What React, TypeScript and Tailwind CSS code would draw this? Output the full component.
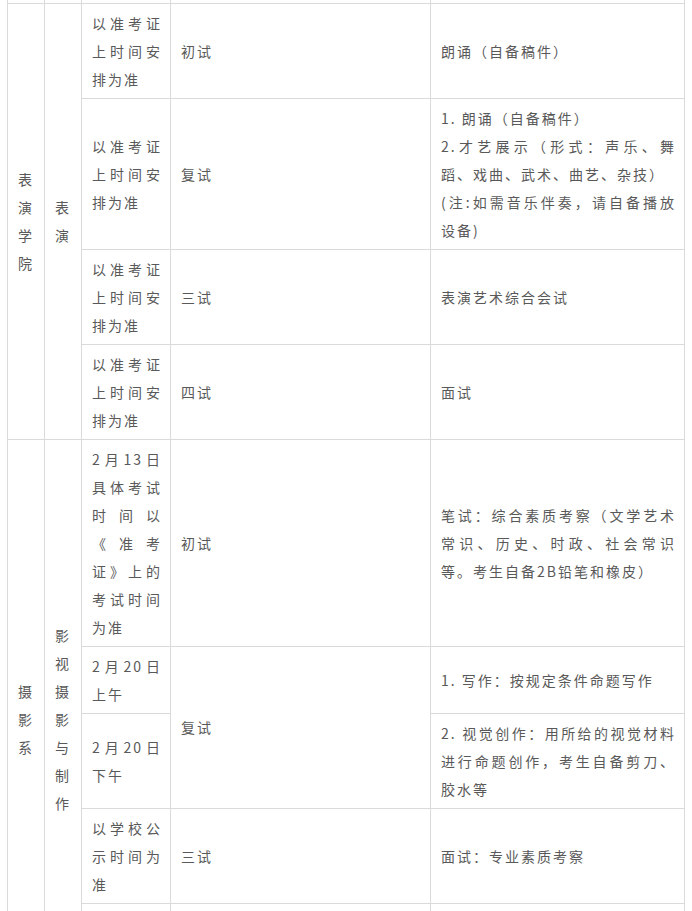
import React from "react";

const td = "border border-[#dadada] pl-[10px] pr-[8px] py-[5px] align-middle text-justify";

type Row = {
  time: string;
  round?: string;
  roundSpan?: number;
  content: React.ReactNode;
};

export default function App() {
  return (
    <div
      className="bg-white h-[911px] overflow-hidden text-[14px] leading-[28px] tracking-[2px] text-[#595959]"
      style={{ fontFamily: '"Noto Sans CJK SC", "Noto Sans", sans-serif' }}
    >
      <table className="table-fixed border-collapse w-[677px] ml-[7px]">
        <colgroup>
          <col className="w-[37px]" />
          <col className="w-[37px]" />
          <col className="w-[89px]" />
          <col className="w-[260px]" />
          <col className="w-[254px]" />
        </colgroup>
        <tbody>
          {/* tail of the previous row, scrolled off */}
          <tr className="h-[3px]">
            <td className="border border-t-0 border-[#dadada] p-0" />
            <td className="border border-t-0 border-[#dadada] p-0" />
            <td className="border border-t-0 border-[#dadada] p-0" />
            <td className="border border-t-0 border-[#dadada] p-0" />
            <td className="border border-t-0 border-[#dadada] p-0" />
          </tr>

          {/* 表演学院 */}
          <tr>
            <td rowSpan={4} className={td}>表演学院</td>
            <td rowSpan={4} className={td}>表演</td>
            <td className={td}>以准考证上时间安排为准</td>
            <td className={td}>初试</td>
            <td className={td}>朗诵（自备稿件）</td>
          </tr>
          <tr>
            <td className={td}>以准考证上时间安排为准</td>
            <td className={td}>复试</td>
            <td className={td}>
              <p>1. 朗诵（自备稿件）</p>
              <p>2.才艺展示（形式：声乐、舞蹈、戏曲、武术、曲艺、杂技）</p>
              <p>(注:如需音乐伴奏，请自备播放设备)</p>
            </td>
          </tr>
          <tr>
            <td className={td}>以准考证上时间安排为准</td>
            <td className={td}>三试</td>
            <td className={td}>表演艺术综合会试</td>
          </tr>
          <tr>
            <td className={td}>以准考证上时间安排为准</td>
            <td className={td}>四试</td>
            <td className={td}>面试</td>
          </tr>

          {/* 摄影系 */}
          <tr>
            <td rowSpan={5} className={td}>摄影系</td>
            <td rowSpan={5} className={td}>影视摄影与制作</td>
            <td className={td}>2月13日具体考试时间以《准考证》上的考试时间为准</td>
            <td className={td}>初试</td>
            <td className={td}>笔试：综合素质考察（文学艺术常识、历史、时政、社会常识等。考生自备2B铅笔和橡皮）</td>
          </tr>
          <tr>
            <td className={td}>2月20日上午</td>
            <td rowSpan={2} className={td}>复试</td>
            <td className={td}>1. 写作：按规定条件命题写作</td>
          </tr>
          <tr>
            <td className={td}>2月20日下午</td>
            <td className={td}>2. 视觉创作：用所给的视觉材料进行命题创作，考生自备剪刀、胶水等</td>
          </tr>
          <tr>
            <td className={td}>以学校公示时间为准</td>
            <td className={td}>三试</td>
            <td className={td}>面试：专业素质考察</td>
          </tr>
          <tr className="h-[95px]">
            <td className={td} />
            <td className={td} />
            <td className={td} />
            <td className={td} />
            <td className={td} />
          </tr>
        </tbody>
      </table>
    </div>
  );
}
